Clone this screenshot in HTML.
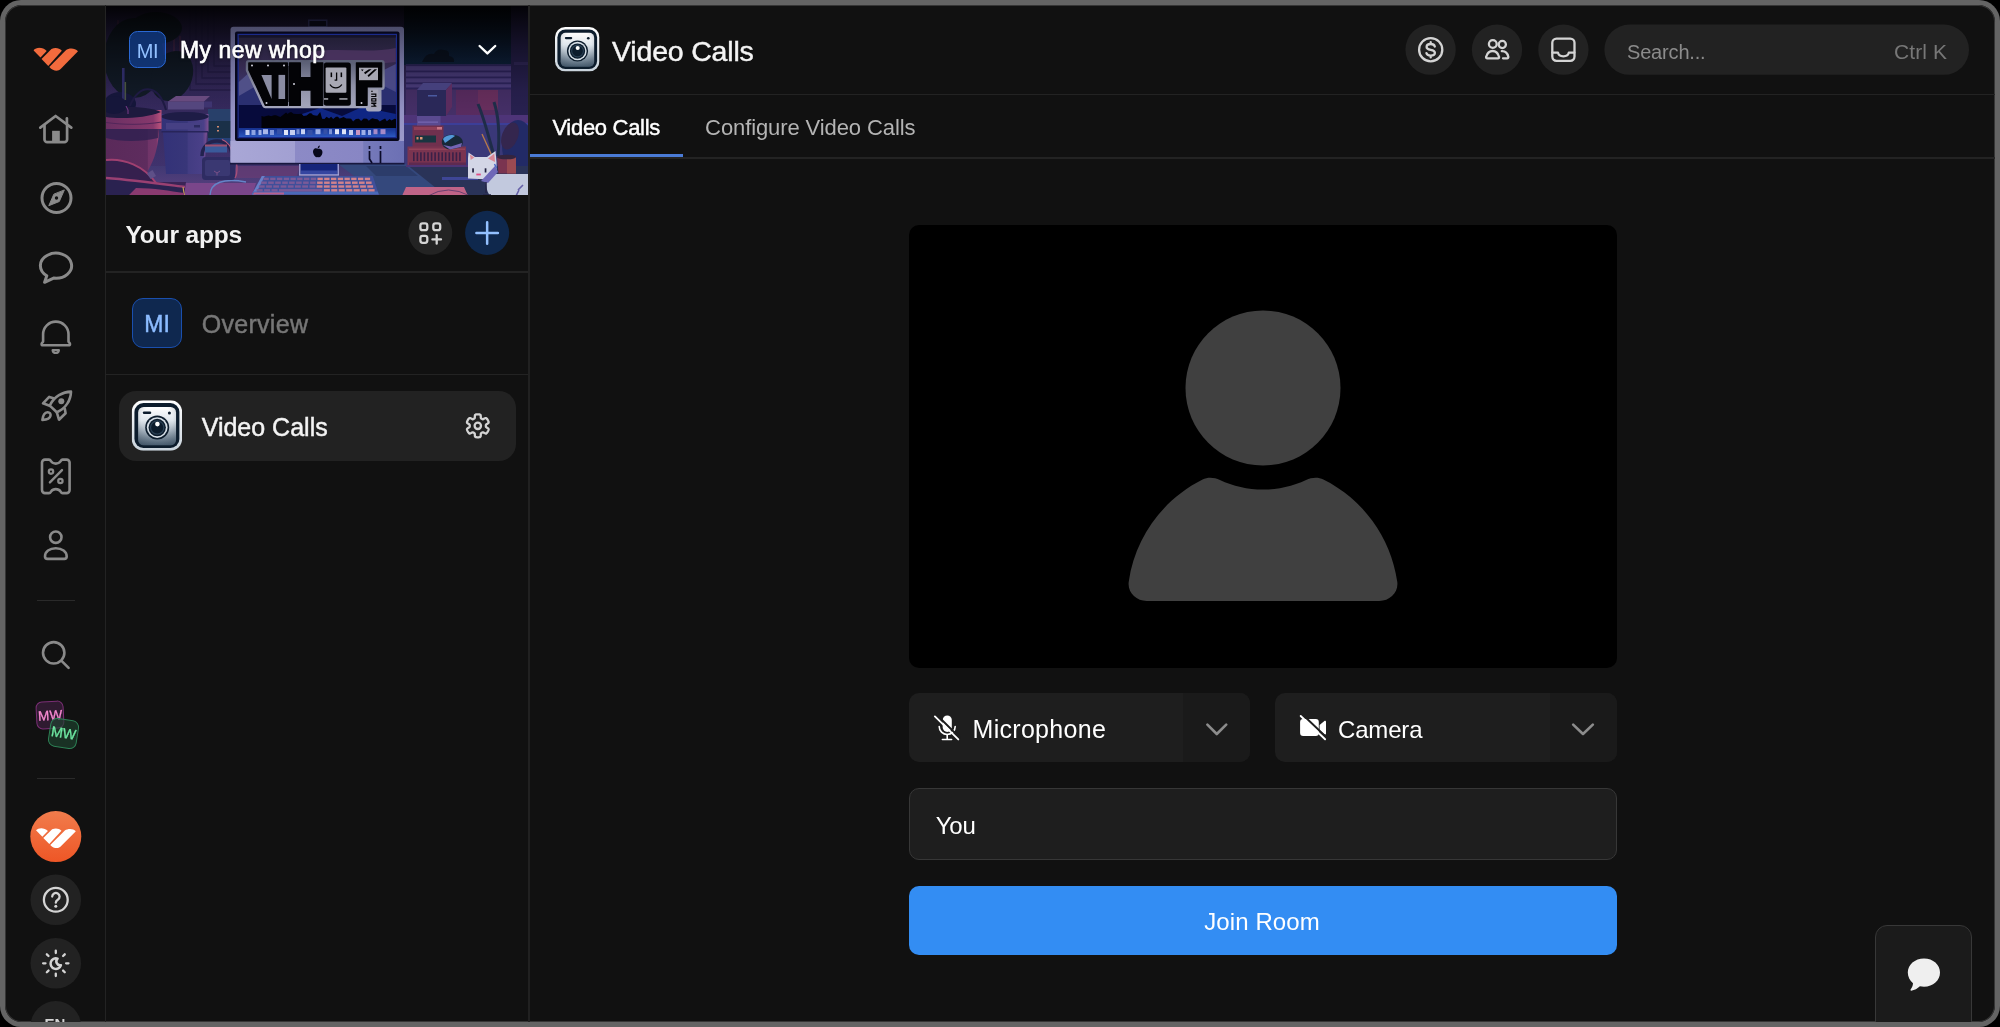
<!DOCTYPE html>
<html>
<head>
<meta charset="utf-8">
<title>Video Calls</title>
<style>
*{box-sizing:border-box;margin:0;padding:0}
html,body{width:2000px;height:1027px;overflow:hidden;background:#000}
body{font-family:"Liberation Sans",sans-serif;position:relative}
.abs{position:absolute}
#frame{position:absolute;left:0;top:0;width:2000px;height:1027px;background:#646464;border-radius:21px}
#app{position:absolute;left:5px;top:5px;width:1990px;height:1017px;background:#111111;border-radius:16.5px;overflow:hidden;box-shadow:inset 0 0 0 1px #363636}
/* everything inside #stage is positioned in page coordinates */
#stage{position:absolute;left:-5px;top:-5px;width:2000px;height:1027px;will-change:transform;transform:translateZ(0)}
.t{position:absolute;white-space:nowrap;line-height:1;color:#fff}
.sb{-webkit-text-stroke:0.45px currentColor}
.vline{position:absolute;width:1.25px;background:#232323}
.hline{position:absolute;height:1.25px;background:#232323}
.circ{position:absolute;border-radius:50%;background:#222222}
svg{position:absolute;overflow:visible}
.ric{fill:none;stroke:#8a8a8a;stroke-width:2.7;stroke-linecap:round;stroke-linejoin:round}
.lic{fill:none;stroke:#d4d4d4;stroke-width:2.3;stroke-linecap:round;stroke-linejoin:round}
</style>
</head>
<body>
<div id="frame"></div>
<div id="app"><div id="stage">

<!-- ===== dividers ===== -->
<div class="vline" style="left:105px;top:0;height:1027px"></div>
<div class="vline" style="left:528.3px;top:0;height:1027px;background:#212121"></div>
<div class="hline" style="left:529.5px;top:94.2px;width:1470px"></div>
<div class="hline" style="left:529.5px;top:157.4px;width:1470px"></div>
<div class="hline" style="left:106px;top:271.3px;width:422px"></div>
<div class="hline" style="left:106px;top:373.8px;width:422px"></div>
<div class="hline" style="left:37px;top:599.8px;width:38px;background:#2a2a2a"></div>
<div class="hline" style="left:37px;top:778px;width:38px;background:#2a2a2a"></div>

<!-- ===== BANNER ===== -->
<div id="banner" class="abs" style="left:106.2px;top:5.5px;width:422px;height:189.5px;overflow:hidden;background:#2c2558">
<!--BANNER_START--><svg style="left:0;top:0" width="422" height="189.5" viewBox="0 0 422 189.5" preserveAspectRatio="none">
<defs>
<linearGradient id="bwall" x1="0" y1="0" x2="0" y2="1"><stop offset="0" stop-color="#2a2250"/><stop offset=".5" stop-color="#3a2d66"/><stop offset="1" stop-color="#463878"/></linearGradient>
<linearGradient id="bsky" x1="0" y1="0" x2="0" y2="1"><stop offset="0" stop-color="#0a1020"/><stop offset="1" stop-color="#102848"/></linearGradient>
<linearGradient id="bdark" x1="0" y1="0" x2="0" y2="1"><stop offset="0" stop-color="#000" stop-opacity=".93"/><stop offset=".08" stop-color="#000" stop-opacity=".76"/><stop offset=".21" stop-color="#000" stop-opacity=".52"/><stop offset=".34" stop-color="#000" stop-opacity=".32"/><stop offset=".45" stop-color="#000" stop-opacity=".17"/><stop offset=".6" stop-color="#000" stop-opacity=".08"/><stop offset="1" stop-color="#000" stop-opacity="0.03"/></linearGradient>
<linearGradient id="bscr" x1="0" y1="0" x2="0" y2="1"><stop offset="0" stop-color="#211e34"/><stop offset=".3" stop-color="#34294e"/><stop offset=".48" stop-color="#3b3468"/><stop offset="1" stop-color="#343676"/></linearGradient>
<linearGradient id="bpot" x1="0" y1="0" x2="1" y2="0"><stop offset="0" stop-color="#5a2a5a"/><stop offset=".78" stop-color="#5e2c5e"/><stop offset=".8" stop-color="#703468"/><stop offset=".95" stop-color="#74366a"/><stop offset="1" stop-color="#b44c7a"/></linearGradient>
<linearGradient id="brim" x1="0" y1="0" x2="1" y2="0"><stop offset="0" stop-color="#6a2f62"/><stop offset=".85" stop-color="#86386c"/><stop offset="1" stop-color="#bc547c"/></linearGradient>
<linearGradient id="bpot2" x1="0" y1="0" x2="1" y2="0"><stop offset="0" stop-color="#333278"/><stop offset=".55" stop-color="#383679"/><stop offset=".57" stop-color="#423c82"/><stop offset=".9" stop-color="#4a4088"/><stop offset="1" stop-color="#805092"/></linearGradient>
<linearGradient id="bdesk" x1="0" y1="0" x2="0" y2="1"><stop offset="0" stop-color="#403872"/><stop offset="1" stop-color="#5e4282"/></linearGradient>
<linearGradient id="bchin" x1="0" y1="0" x2="1" y2="0"><stop offset="0" stop-color="#a9a7d6"/><stop offset=".37" stop-color="#a2a0d2"/><stop offset=".372" stop-color="#8c8ac6"/><stop offset=".765" stop-color="#8886c4"/><stop offset=".767" stop-color="#767aba"/><stop offset="1" stop-color="#6c70b4"/></linearGradient>
<linearGradient id="bfrm" x1="0" y1="0" x2="0" y2="1"><stop offset="0" stop-color="#4c4c6a"/><stop offset=".25" stop-color="#6e6e98"/><stop offset=".6" stop-color="#9290c2"/><stop offset="1" stop-color="#a3a1d2"/></linearGradient>
<linearGradient id="blogo" x1="0" y1="0" x2="0" y2="1"><stop offset="0" stop-color="#5c6076"/><stop offset=".5" stop-color="#8e90a6"/><stop offset="1" stop-color="#a4a6bc"/></linearGradient>
<linearGradient id="bdock" x1="0" y1="0" x2="0" y2="1"><stop offset="0" stop-color="#15308e"/><stop offset="1" stop-color="#2c58c0"/></linearGradient>
</defs>
<rect width="422" height="190" fill="url(#bwall)"/>
<g fill="none" stroke="#2a2152" stroke-width="1.4"><path d="M84 0 V84 H128 M90 0 V78 H128 M96 0 V72 H128 M102 0 V66 H128 M108 0 V60 H128"/></g>
<g stroke="#7a3a60" stroke-width="1" fill="none" opacity=".8"><path d="M68 18 V52 M74 30 V70 l2 8 M60 60 l5 -6 M20 40 v26 M12 14 v20"/></g>
<g fill="#141e2c"><ellipse cx="28" cy="52" rx="30" ry="40"/><ellipse cx="66" cy="70" rx="20" ry="26" transform="rotate(25 66 70)"/><ellipse cx="50" cy="22" rx="26" ry="16"/></g>
<rect x="298" y="0" width="110" height="59" fill="url(#bsky)"/>
<path d="M316 56 q4 -10 12 -8 q3 -6 10 -4 q6 0 5 6 q6 1 5 6Z" fill="#0c1628"/>
<rect x="300" y="58.500" width="108" height="24" fill="#54448c"/>
<g fill="#34296a"><rect x="300" y="58.500" width="108" height="1.600"/><rect x="300" y="64.500" width="108" height="1.800"/><rect x="300" y="70.500" width="108" height="1.800"/><rect x="300" y="76.400" width="108" height="1.800"/><rect x="300" y="81.500" width="108" height="2"/></g>
<rect x="300" y="83.500" width="108" height="34" fill="#4c3472"/>
<rect x="350" y="84" width="42" height="26" fill="#62306a"/><rect x="372" y="84" width="20" height="20" fill="#743468"/>
<rect x="405" y="0" width="17" height="130" fill="#2c2458"/><rect x="408" y="56" width="14" height="3" fill="#3a2f6a"/>
<!-- overlay (darkens background layers only) -->
<rect width="422" height="190" fill="url(#bdark)"/>

<!-- left mid -->
<ellipse cx="14" cy="98" rx="16" ry="12" fill="#15163a"/>
<rect x="16" y="62" width="2.600" height="42" fill="#2c2a62"/><rect x="18.600" y="76" width="1.500" height="18" fill="#6a7a4a" opacity=".6"/>
<path d="M24 100 C32 78 52 76 60 104" fill="none" stroke="#1e1a42" stroke-width="2"/>
<rect x="62" y="95.500" width="36" height="8" fill="#54467e"/><path d="M62 95.500 L70 90 H104 L98 95.500Z" fill="#684a7e"/><rect x="98" y="95.500" width="8" height="6" fill="#3e3470"/>
<rect x="102" y="103" width="23" height="12" fill="#28406a"/><rect x="102" y="115" width="23" height="17" fill="#1a3048"/><rect x="102" y="132" width="23" height="6" fill="#264078"/>
<rect x="111" y="120" width="2" height="1.500" fill="#d08a70"/><rect x="111" y="124" width="2" height="1.500" fill="#d08a70"/>
<!-- right lower wall -->
<rect x="298" y="109" width="124" height="9.500" fill="#4e3478"/><rect x="298" y="117" width="124" height="2" fill="#3c3e98"/>
<rect x="298" y="119" width="124" height="42" fill="#3a3878"/>
<path d="M388 150 C382 128 378 112 372 98 M392 150 C394 126 392 108 388 96" stroke="#1e2c48" stroke-width="3" fill="none"/>
<path d="M386 150 L376 128" stroke="#b87c4a" stroke-width="1.300"/>
<ellipse cx="412" cy="140" rx="16" ry="26" fill="#222a66"/><ellipse cx="404" cy="130" rx="8" ry="14" fill="#34264e" transform="rotate(20 404 130)"/>
<!-- desk -->
<path d="M0 160 H422 V190 H0Z" fill="url(#bdesk)"/>
<path d="M298 160 H422 V190 H300Z" fill="#2a3358"/>
<path d="M232 158 H300 L340 190 H275Z" fill="#34487c"/><path d="M260 160 H300 L312 170 H270Z" fill="#2c3c6a"/>
<path d="M300 181 H358 L362 190 H296Z" fill="#c06488"/><path d="M322 190 q20 -12 42 0" fill="none" stroke="#6a4070" stroke-width="1"/>
<path d="M336 171 H372 V174 H336Z" fill="#3e4696"/>
<path d="M130 160 H194 L190 172 H126Z" fill="#6a3c74" opacity=".7"/>
<path d="M78 177 H150 L146 190 H70Z" fill="#7a468a"/><path d="M0 176 L80 176 L78 190 H0Z" fill="#3a2456"/>
<path d="M104 190 C104 176 118 172 140 176" fill="none" stroke="#6484c8" stroke-width="1.400"/>
<!-- pot 2 -->
<path d="M57 126 H101 L98 168 H60Z" fill="url(#bpot2)"/>
<path d="M55.500 108 H102.500 V126 H55.500Z" fill="url(#bpot2)"/><ellipse cx="79" cy="110.500" rx="23.500" ry="4.600" fill="#1e1c46"/><rect x="60" y="117" width="36" height="6.500" fill="#464084"/><rect x="88" y="119" width="6" height="2.500" fill="#2c2a60"/><rect x="55.500" y="125" width="47" height="1.500" fill="#28255a"/>
<!-- pot 1 -->
<path d="M0 122 H53 C52.500 138 50 152 40 168 H0Z" fill="url(#bpot)"/><path d="M0 123 H53 L52 132 C36 136 14 136 0 132Z" fill="#2e2050" opacity=".8"/>
<path d="M0 104 H55.500 V123 H0Z" fill="url(#brim)"/><path d="M0 101.500 C20 100 45 101 55 106 C40 112.500 12 113 0 111Z" fill="#1e1a3e"/><path d="M0 116.500 C18 119 38 119 55.500 116" fill="none" stroke="#52265a" stroke-width="1"/>
<ellipse cx="8" cy="99" rx="13" ry="9" fill="#15163a"/><path d="M20 100 q3 4 2 8" stroke="#7a3a8a" stroke-width="1" fill="none"/>
<!-- chair -->
<path d="M0 154 C18 152 38 160 50 177 H0Z" fill="#35204e"/><path d="M0 154 C18 152 38 160 50 177" fill="none" stroke="#a04070" stroke-width="2"/>
<path d="M41 167.500 l5.500 -3.500 l3.500 6 l-5.500 3Z" fill="#5e5088"/>
<path d="M0 172 C28 174 56 178 79 181 L78 190 H0Z" fill="#2a2250"/><path d="M0 172 C28 174 56 178 79 181" fill="none" stroke="#9a4072" stroke-width="2.400"/><path d="M77 181 l1.500 9" stroke="#c8a058" stroke-width="1.200"/>
<path d="M30 182 C48 182 64 185 78 187 V190 H22Z" fill="#8a3a70"/>
<!-- backpack -->
<path d="M96 150 C96 130 126 130 126 150" fill="none" stroke="#22224e" stroke-width="3.500"/><path d="M116 133.500 C123 136 126 142 126.500 150" fill="none" stroke="#b85a7c" stroke-width="1.300"/>
<rect x="99" y="140" width="22" height="6.500" fill="#3a5a9a"/><rect x="99" y="138.500" width="22" height="2" fill="#9a5070"/>
<rect x="96" y="151" width="33" height="23" rx="3.500" fill="#2e2c62"/><rect x="99" y="154" width="25" height="16" rx="2" fill="#3a3872"/><path d="M128 153 c3.500 1 4 14 1 19" fill="none" stroke="#a85078" stroke-width="1.300"/>
<path d="M108 165 l3 2 l3 -2 M111 167 v2.500" stroke="#7a5088" stroke-width="1" fill="none"/>
<!-- radio stack -->
<rect x="311" y="84" width="29" height="26" fill="#2a2858"/><path d="M311 84 L317 77 H346 L340 84Z" fill="#45407c"/><path d="M340 84 L346 77 V101 L340 110Z" fill="#5a2c5e"/><rect x="322" y="89" width="9" height="1.500" fill="#4a5aa0"/>
<rect x="311" y="110" width="23.500" height="10" fill="#5a4a90"/><rect x="312" y="115.500" width="20" height="1.300" fill="#7464ae"/>
<rect x="306.500" y="119.500" width="31" height="21.500" fill="#70304e"/><rect x="308" y="121" width="28" height="3" fill="#8e3e58"/><rect x="331" y="121" width="5" height="2.500" fill="#c87484"/><rect x="309" y="129.500" width="21" height="7" fill="#1a3440"/><rect x="310.500" y="131" width="2" height="2.500" fill="#d88468"/><rect x="314" y="131" width="2.500" height="2.500" fill="#e09878"/>
<rect x="301.500" y="140.500" width="58.500" height="19" fill="#7a3450"/><rect x="303" y="142.500" width="56" height="1.500" fill="#94425a"/><rect x="303" y="156.500" width="57" height="2.700" fill="#5e2a50"/><rect x="307.0" y="146.3" width="1.6" height="8.8" fill="#3a2048"/><rect x="310.6" y="146.3" width="1.6" height="8.8" fill="#3a2048"/><rect x="314.1" y="146.3" width="1.6" height="8.8" fill="#3a2048"/><rect x="317.6" y="146.3" width="1.6" height="8.8" fill="#3a2048"/><rect x="321.2" y="146.3" width="1.6" height="8.8" fill="#3a2048"/><rect x="324.8" y="146.3" width="1.6" height="8.8" fill="#3a2048"/><rect x="328.3" y="146.3" width="1.6" height="8.8" fill="#3a2048"/><rect x="331.9" y="146.3" width="1.6" height="8.8" fill="#3a2048"/><rect x="335.4" y="146.3" width="1.6" height="8.8" fill="#3a2048"/><rect x="338.9" y="146.3" width="1.6" height="8.8" fill="#3a2048"/><rect x="342.5" y="146.3" width="1.6" height="8.8" fill="#3a2048"/><rect x="346.1" y="146.3" width="1.6" height="8.8" fill="#3a2048"/><rect x="349.6" y="146.3" width="1.6" height="8.8" fill="#3a2048"/><rect x="353.1" y="146.3" width="1.6" height="8.8" fill="#3a2048"/>
<rect x="300" y="159" width="62" height="2" fill="#4e3474"/>
<path d="M336 134 C338 128 350 127 355 132 C358 135 357 140 354 141.500 L344 143.500 C338 143 335 139 336 134Z" fill="#182838"/><path d="M337 133 C340 128.500 347 128.500 349 130 L339 137Z" fill="#5298d8"/><path d="M337 139 L344 143.500 L355 141 L356 137 L345 140.500Z" fill="#7464b4"/>
<!-- small pot right -->
<path d="M391 151 H410 V167.500 H392.500Z" fill="#7a3450"/><rect x="401" y="151" width="9" height="16.500" fill="#9a4a52"/><ellipse cx="400.500" cy="151" rx="9.500" ry="2.300" fill="#34243e"/>
<!-- cat -->
<path d="M380 168 H422 V190 H384 C380 184 379 176 380 168Z" fill="#c2c9de"/>
<path d="M362 172.500 V152 L362.500 146.500 L369 151 H381 L389.500 145 L390.500 156 V166 L384 173.500Z" fill="#d3d6e6"/>
<path d="M364 148.500 l4.300 3 l-3.600 2.500Z M388.300 147.500 l0.700 8.500 l-7 -3.500Z" fill="#da8896"/>
<rect x="366.200" y="162.300" width="1.700" height="4.200" fill="#20203e"/><rect x="378.700" y="162.300" width="1.700" height="4.200" fill="#20203e"/><rect x="370.300" y="167.600" width="4.500" height="1.800" fill="#e04c86"/>
<path d="M389 160 L392 166 L382 177 L375 175 Z" fill="#6e68b8"/><path d="M388.500 158 l2 4" stroke="#4666c8" stroke-width="1.400"/>
<path d="M380 176 v11 M377 189 h8" stroke="#26264a" stroke-width="1.600"/>
<path d="M412 184 l5 -5 M410 190 l3 -6" stroke="#6660a8" stroke-width="1.600"/>
<!-- monitor -->
<rect x="202" y="13.500" width="19.500" height="8" fill="#16162c"/><rect x="203.500" y="15" width="16.500" height="5" fill="#06060e"/>
<rect x="124.500" y="20.800" width="173.500" height="137" rx="3" fill="url(#bfrm)"/>
<rect x="124.500" y="135" width="173.500" height="22.500" fill="url(#bchin)"/>
<rect x="124" y="156.800" width="174.500" height="1.700" fill="#18183e"/>
<rect x="129" y="25.400" width="164.500" height="109.500" rx="2" fill="#07071c"/>
<rect x="131.500" y="27.800" width="159.500" height="104.500" fill="#1a2a8a"/>
<rect x="132.800" y="29" width="157" height="102" fill="url(#bscr)"/>
<rect x="132.800" y="29" width="157" height="2.600" fill="#15132a"/>
<path d="M205 46 C232 41 262 48 289.800 42 V56 C262 60 232 53 205 58Z" fill="#4e3462" opacity=".8"/>
<path d="M132.800 76 L146 64 L160 74 L176 62 L196 78 L132.800 98Z" fill="#55568e" opacity=".85"/>
<path d="M132.800 90 L150 80 L170 88 L200 74 L232 88 L262 72 L289.800 84 V112 H132.800Z" fill="#2a2f70"/>
<path d="M262 72 L289.800 58 V86Z" fill="#4e4e8c" opacity=".8"/>
<rect x="132.800" y="99" width="157" height="32" fill="#070b3c"/>
<path d="M196 122 V108 L214 102 L236 110 L256 101 L289.800 108 V122Z" fill="#0f2684"/>
<path d="M155.5 122 L155.5 110 L155.5 109.9 L158.0 110.8 L160.2 110.0 L162.7 109.4 L165.1 110.3 L168.0 109.2 L170.0 109.2 L172.9 110.4 L174.4 111.0 L177.6 108.6 L180.1 106.6 L181.6 108.1 L183.2 106.8 L185.1 106.1 L187.4 107.8 L190.4 108.1 L193.0 108.0 L195.6 107.8 L197.6 110.0 L200.7 109.4 L203.5 107.3 L205.3 107.2 L207.0 109.1 L209.1 109.4 L211.3 109.8 L214.2 106.0 L216.1 112.8 L218.4 113.0 L220.6 110.7 L223.1 112.4 L225.1 110.7 L227.2 112.9 L230.0 110.8 L231.9 110.8 L233.5 112.5 L235.3 111.9 L237.5 111.0 L240.3 112.5 L242.9 112.4 L245.1 112.7 L247.1 115.4 L249.9 113.1 L252.9 112.7 L255.1 115.0 L257.7 112.4 L260.9 112.7 L262.8 114.7 L264.9 113.0 L266.5 112.3 L269.0 112.9 L271.5 113.3 L273.8 115.4 L276.1 114.0 L279.1 112.6 L280.8 115.2 L283.7 112.9 L285.5 114.6 L288.6 112.7 L290 113 L290 122.5 L155.5 122.5Z" fill="#020208"/>
<rect x="132.800" y="122" width="157" height="9" fill="url(#bdock)"/>
<rect x="139.5" y="124.0" width="4" height="5" fill="#c9d3f3"/><rect x="145.5" y="124.0" width="4" height="5" fill="#8ea3e2"/><rect x="152.5" y="124.0" width="3" height="5" fill="#9fb1e8"/><rect x="157.0" y="123.2" width="5" height="5" fill="#a9b8ea"/><rect x="164.0" y="124.0" width="4" height="5" fill="#7f95d8"/><rect x="171.0" y="123.2" width="5" height="5" fill="#3450a8"/><rect x="178.0" y="124.0" width="4" height="5" fill="#dfe4f8"/><rect x="184.0" y="124.0" width="5" height="5" fill="#c4cef0"/><rect x="190.5" y="123.2" width="3" height="5" fill="#6f88d0"/><rect x="195.0" y="123.2" width="4" height="5" fill="#c9d3f3"/><rect x="201.5" y="124.0" width="5" height="5" fill="#3450a8"/><rect x="209.5" y="123.2" width="5" height="5" fill="#9fb1e8"/><rect x="217.5" y="123.2" width="4" height="5" fill="#3450a8"/><rect x="223.0" y="123.2" width="3" height="5" fill="#7f95d8"/><rect x="229.0" y="123.2" width="4" height="5" fill="#e2e7f8"/><rect x="236.0" y="123.2" width="4" height="5" fill="#dfe4f8"/><rect x="243.0" y="124.0" width="4" height="5" fill="#c4cef0"/><rect x="250.0" y="124.0" width="4" height="5" fill="#c894c0"/><rect x="255.5" y="124.0" width="4" height="5" fill="#9fb0e8"/><rect x="262.0" y="124.0" width="3" height="5" fill="#9fb0e8"/><rect x="267.5" y="123.2" width="4" height="5" fill="#a58ac8"/><rect x="274.5" y="123.2" width="5" height="5" fill="#a58ac8"/>
<!-- WHOP logo -->
<g>
<path d="M142.800 56.900 H275.700 V80.900 H272.500 V102.500 H263 V99.300 H250.400 H159.200 L142.800 64Z" fill="url(#blogo)" stroke="url(#blogo)" stroke-width="6" stroke-linejoin="round"/>
<path d="M142.800 56.900 H181.400 V99.300 H159.200 L142.800 64Z" fill="#030306" stroke="#030306" stroke-width="1.2" stroke-linejoin="round"/>
<path d="M155.400 68.900 H165.600 V93Z" fill="#8a8ca2"/><rect x="172.500" y="68.900" width="6.600" height="24.100" fill="#8a8ca2"/>
<path d="M183.400 56.900 H194.400 V71.500 H205.100 V56.900 H216.800 V99.300 H205.100 V84.100 H194.400 V99.300 H183.400Z" fill="#030306" stroke="#030306" stroke-width="1.2" stroke-linejoin="round"/>
<rect x="181.400" y="60" width="2" height="36" fill="#030306" opacity=".55"/>
<rect x="217.800" y="56.400" width="27" height="43.400" rx="2.500" fill="#030306"/>
<rect x="219.600" y="61.600" width="20.800" height="25.200" rx="1" fill="#a8a8b4"/>
<rect x="224.600" y="66.500" width="1.500" height="4.600" fill="#030306"/><rect x="234.600" y="66.500" width="1.500" height="4.600" fill="#030306"/>
<path d="M230.600 66.500 V74.200 H228.600" fill="none" stroke="#030306" stroke-width="1.300"/><path d="M224 78.500 C226.500 83 233 83 235.800 78.500" fill="none" stroke="#030306" stroke-width="1.300"/>
<rect x="218" y="92.300" width="4.200" height="1.300" fill="#c0c0ca"/><rect x="233.300" y="92.300" width="8.200" height="1.300" fill="#c0c0ca"/>
<path d="M250.400 56.900 H275.700 V80.900 H261.100 V99.300 H250.400Z" fill="#030306" stroke="#030306" stroke-width="1.2" stroke-linejoin="round"/>
<rect x="253" y="61.700" width="19" height="12.500" fill="#a8a8b4"/>
<path d="M255 63.500 l2.600 0 l-1.300 1.700Z M258 66.600 l5 -3.300 l2.600 0 l-6.400 4.900Z M261.500 69.500 l7 -6.200 l2.500 0 l-8.300 7.700Z" fill="#030306"/>
<rect x="263.600" y="83.500" width="8.600" height="18.500" fill="#a4a4b4"/>
<g fill="#030306"><rect x="265.300" y="84.700" width="1.300" height="1.300"/><path d="M265.200 87.500 h5.200 v3.600 h-5.200 v-1.200 h4 v-1.200 h-4Z"/><rect x="265.200" y="92.200" width="5.200" height="3.400"/><path d="M265.200 96.600 h5.200 v1.100 l-2 1 l2 1 v1.100 h-5.200 v-1.100 h3 l-1.600 -.9 l1.600 -.9 h-3Z"/></g>
<rect x="266.400" y="93.300" width="2.800" height="1.200" fill="#a4a4b4"/>
<g fill="#d0d0dc"><circle cx="146" cy="59.500" r="1"/><circle cx="162" cy="59.500" r="1"/><circle cx="178" cy="59.500" r="1"/><circle cx="188" cy="78" r="1"/><circle cx="160.500" cy="97" r="1"/><circle cx="255.500" cy="97" r="1"/></g>
</g>
<path d="M211.800 142.800 c-2.600 -1.600 -5.400 .6 -4.600 4.200 c.8 3.400 3 4.800 4.700 3.900 c1.700 .9 3.900 -.5 4.500 -3.900 c.4 -2.200 -.9 -4.800 -4.600 -4.200Z M211.600 142.400 c.2 -1.800 1.200 -2.600 2.200 -2.800 c.1 1.500 -.7 2.600 -2.200 2.800Z" fill="#07071a"/>
<path d="M263.500 140 v3 M263.500 145 v8 l2.500 4 M274.500 140 v3 M274.500 145 v12" stroke="#0a0a28" stroke-width="1.700" fill="none"/>
<rect x="193" y="158" width="40" height="11" fill="#15247a"/><rect x="195" y="164.500" width="36" height="4.500" fill="#3545a0"/><rect x="193" y="158" width="1.500" height="11" fill="#9a9ad0"/><rect x="231.500" y="158" width="1.500" height="11" fill="#9a9ad0"/><rect x="193" y="168.300" width="40" height="1.300" fill="#a8a8d8"/>
<path d="M155.800 170 H266.800 L272.800 188.500 H145.800Z" fill="#3f4f9a"/>
<path d="M155.800 170 L145.800 188.500 L149.500 188.500 L158.800 170Z" fill="#6a80c8"/>
<path d="M147.500 185.500 H271.800 L272.800 188.500 H145.800Z" fill="#4a6ab8"/>
<path d="M148 186.500 H178 V188.500 H147Z" fill="#b8608c"/>
<rect x="157.5" y="171.7" width="5.3" height="2.4" fill="#7a5a98"/><rect x="164.2" y="171.7" width="5.3" height="2.4" fill="#7a5a98"/><rect x="171.0" y="171.7" width="5.3" height="2.4" fill="#7a5a98"/><rect x="177.8" y="171.7" width="5.3" height="2.4" fill="#7a5a98"/><rect x="184.5" y="171.7" width="5.3" height="2.4" fill="#7a5a98"/><rect x="191.2" y="171.7" width="5.3" height="2.4" fill="#7a5a98"/><rect x="198.0" y="171.7" width="5.3" height="2.4" fill="#7a5a98"/><rect x="204.8" y="171.7" width="5.3" height="2.4" fill="#7a5a98"/><rect x="211.5" y="171.7" width="5.3" height="2.4" fill="#d2828c"/><rect x="218.2" y="171.7" width="5.3" height="2.4" fill="#d2828c"/><rect x="225.0" y="171.7" width="5.3" height="2.4" fill="#d2828c"/><rect x="231.8" y="171.7" width="5.3" height="2.4" fill="#d2828c"/><rect x="238.5" y="171.7" width="5.3" height="2.4" fill="#d2828c"/><rect x="245.2" y="171.7" width="5.3" height="2.4" fill="#d2828c"/><rect x="252.0" y="171.7" width="5.3" height="2.4" fill="#d2828c"/><rect x="258.8" y="171.7" width="5.3" height="2.4" fill="#d2828c"/><rect x="155.2" y="175.5" width="5.6" height="2.4" fill="#7a5a98"/><rect x="162.2" y="175.5" width="5.6" height="2.4" fill="#7a5a98"/><rect x="169.2" y="175.5" width="5.6" height="2.4" fill="#7a5a98"/><rect x="176.2" y="175.5" width="5.6" height="2.4" fill="#7a5a98"/><rect x="183.1" y="175.5" width="5.6" height="2.4" fill="#7a5a98"/><rect x="190.1" y="175.5" width="5.6" height="2.4" fill="#7a5a98"/><rect x="197.1" y="175.5" width="5.6" height="2.4" fill="#7a5a98"/><rect x="204.1" y="175.5" width="5.6" height="2.4" fill="#7a5a98"/><rect x="211.1" y="175.5" width="5.6" height="2.4" fill="#d2828c"/><rect x="218.1" y="175.5" width="5.6" height="2.4" fill="#d2828c"/><rect x="225.1" y="175.5" width="5.6" height="2.4" fill="#d2828c"/><rect x="232.1" y="175.5" width="5.6" height="2.4" fill="#d2828c"/><rect x="239.1" y="175.5" width="5.6" height="2.4" fill="#d2828c"/><rect x="246.0" y="175.5" width="5.6" height="2.4" fill="#d2828c"/><rect x="253.0" y="175.5" width="5.6" height="2.4" fill="#d2828c"/><rect x="260.0" y="175.5" width="5.6" height="2.4" fill="#d2828c"/><rect x="152.9" y="179.3" width="5.8" height="2.4" fill="#7a5a98"/><rect x="160.1" y="179.3" width="5.8" height="2.4" fill="#7a5a98"/><rect x="167.3" y="179.3" width="5.8" height="2.4" fill="#7a5a98"/><rect x="174.6" y="179.3" width="5.8" height="2.4" fill="#7a5a98"/><rect x="181.8" y="179.3" width="5.8" height="2.4" fill="#7a5a98"/><rect x="189.0" y="179.3" width="5.8" height="2.4" fill="#7a5a98"/><rect x="196.2" y="179.3" width="5.8" height="2.4" fill="#7a5a98"/><rect x="203.5" y="179.3" width="5.8" height="2.4" fill="#7a5a98"/><rect x="210.7" y="179.3" width="5.8" height="2.4" fill="#d2828c"/><rect x="217.9" y="179.3" width="5.8" height="2.4" fill="#d2828c"/><rect x="225.2" y="179.3" width="5.8" height="2.4" fill="#d2828c"/><rect x="232.4" y="179.3" width="5.8" height="2.4" fill="#d2828c"/><rect x="239.6" y="179.3" width="5.8" height="2.4" fill="#d2828c"/><rect x="246.8" y="179.3" width="5.8" height="2.4" fill="#d2828c"/><rect x="254.1" y="179.3" width="5.8" height="2.4" fill="#d2828c"/><rect x="261.3" y="179.3" width="5.8" height="2.4" fill="#d2828c"/><rect x="150.6" y="183.1" width="6.1" height="2.4" fill="#7a5a98"/><rect x="158.1" y="183.1" width="6.1" height="2.4" fill="#7a5a98"/><rect x="165.5" y="183.1" width="6.1" height="2.4" fill="#7a5a98"/><rect x="173.0" y="183.1" width="43.4" height="2.4" fill="#7a5a98"/><rect x="217.8" y="183.1" width="6.1" height="2.4" fill="#d2828c"/><rect x="225.2" y="183.1" width="6.1" height="2.4" fill="#d2828c"/><rect x="232.7" y="183.1" width="6.1" height="2.4" fill="#d2828c"/><rect x="240.2" y="183.1" width="6.1" height="2.4" fill="#d2828c"/><rect x="247.6" y="183.1" width="6.1" height="2.4" fill="#d2828c"/><rect x="255.1" y="183.1" width="6.1" height="2.4" fill="#d2828c"/><rect x="262.5" y="183.1" width="6.1" height="2.4" fill="#d2828c"/>
</svg><!--BANNER_END-->
</div>

<!-- banner header -->
<div class="abs" style="left:128.7px;top:30.8px;width:37.6px;height:37.6px;border-radius:8.5px;background:rgba(20,74,172,.6);border:1.5px solid #2a68d4"></div>
<div class="t" style="left:136.8px;top:41.3px;font-size:20px;color:#93c1ff;letter-spacing:-0.4px">MI</div>
<div class="t" style="left:180px;top:39.2px;font-size:23px;letter-spacing:0.45px;-webkit-text-stroke:0.65px #fff;text-shadow:0 1px 3px rgba(0,0,0,.6)">My new whop</div>
<svg style="left:476px;top:40px" width="24" height="20" viewBox="0 0 24 20"><path d="M3.6 6 L11.4 13.4 L19.2 6" fill="none" stroke="#fff" stroke-width="2.4" stroke-linecap="round" stroke-linejoin="round"/></svg>

<!-- ===== Your apps ===== -->
<div class="t" style="left:125.4px;top:223px;font-size:24.5px;font-weight:700;letter-spacing:-0.15px;color:#f2f2f2">Your apps</div>

<!-- Overview row -->
<div class="abs" style="left:131.6px;top:297.9px;width:50.6px;height:50.4px;border-radius:11px;background:#0f284f;border:1.5px solid #1a4fae"></div>
<div class="t sb" style="left:144.3px;top:312.5px;font-size:23px;color:#8cbcff">MI</div>
<div class="t sb" style="left:201.7px;top:312.3px;font-size:25px;color:#777777;letter-spacing:0.3px">Overview</div>

<!-- Video calls selected row -->
<div class="abs" style="left:119.2px;top:391px;width:396.5px;height:69.5px;border-radius:17px;background:#222222"></div>
<div class="t sb" style="left:201.7px;top:415.1px;font-size:25px;color:#f4f4f4">Video Calls</div>

<!-- ===== HEADER ===== -->
<div class="t sb" style="left:612px;top:37px;font-size:28.5px;letter-spacing:-0.18px;color:#f4f4f4">Video Calls</div>
<svg style="left:0;top:0" width="2000" height="300" viewBox="0 0 2000 300">
<circle cx="1430.6" cy="49.65" r="25.15" fill="#222"/><circle cx="1497" cy="49.65" r="25.15" fill="#222"/><circle cx="1563.4" cy="49.65" r="25.15" fill="#222"/>
<rect x="1604.4" y="24.5" width="364.6" height="50.3" rx="25.15" fill="#222"/>
<circle cx="430.3" cy="232.9" r="21.95" fill="#232323"/><circle cx="487.15" cy="232.9" r="22.05" fill="#0f284d"/>
</svg>
<div class="t" style="left:1627px;top:42px;font-size:20px;color:#8b8b8b;letter-spacing:-0.17px">Search...</div>
<div class="t" style="left:1894px;top:41px;font-size:21px;color:#777777;letter-spacing:0.1px">Ctrl K</div>

<!-- tabs -->
<div class="t sb" style="left:552.4px;top:117px;font-size:22px;letter-spacing:-0.3px">Video Calls</div>
<div class="t" style="left:705.1px;top:117px;font-size:22px;letter-spacing:-0.1px;color:#b4b4b4">Configure Video Calls</div>
<div class="abs" style="left:529.9px;top:153.7px;width:153px;height:3.6px;background:#4a7bd6"></div>

<!-- ===== MAIN ===== -->
<div class="abs" style="left:908.6px;top:224.8px;width:708.2px;height:442.8px;border-radius:10px;background:#000"></div>
<svg style="left:1107.8px;top:291.3px" width="310" height="310" viewBox="0 0 320 320"><path d="M160 180C204.182 180 240 144.183 240 100C240 55.8172 204.182 20 160 20C115.817 20 79.9997 55.8172 79.9997 100C79.9997 144.183 115.817 180 160 180Z" fill="#404040"/><path d="M97.6542 194.614C103.267 191.818 109.841 192.481 115.519 195.141C129.025 201.466 144.1 205 159.999 205C175.899 205 190.973 201.466 204.48 195.141C210.158 192.481 216.732 191.818 222.345 194.614C262.703 214.719 291.985 253.736 298.591 300.062C300.15 310.997 291.045 320 280 320H39.9997C28.9545 320 19.8499 310.997 21.4092 300.062C28.0157 253.736 57.2966 214.719 97.6542 194.614Z" fill="#404040"/></svg>

<!-- mic group -->
<div class="abs" style="left:908.7px;top:693.2px;width:341.3px;height:68.8px;border-radius:10px;background:#1e1e1e;overflow:hidden"><div class="abs" style="left:274.5px;top:0;width:70px;height:70px;background:#1a1a1a"></div></div>
<div class="t" style="left:972.5px;top:717.4px;font-size:25px;letter-spacing:0.3px">Microphone</div>
<!-- cam group -->
<div class="abs" style="left:1275px;top:693.2px;width:341.7px;height:68.8px;border-radius:10px;background:#1e1e1e;overflow:hidden"><div class="abs" style="left:275px;top:0;width:70px;height:70px;background:#1a1a1a"></div></div>
<div class="t" style="left:1338px;top:718.3px;font-size:24px;letter-spacing:-0.17px">Camera</div>

<!-- input -->
<div class="abs" style="left:908.7px;top:788.1px;width:708px;height:72px;border-radius:10px;background:#1e1e1e;border:1.3px solid #373737"></div>
<div class="t" style="left:935.7px;top:813.9px;font-size:24px;letter-spacing:-0.2px">You</div>
<!-- join -->
<div class="abs" style="left:908.7px;top:885.6px;width:708px;height:69.4px;border-radius:10px;background:#338df3"></div>
<div class="t" style="left:1204.2px;top:910.3px;font-size:24px;letter-spacing:0.1px">Join Room</div>

<!-- chat widget -->
<div class="abs" style="left:1875.2px;top:925.1px;width:97.3px;height:120px;border-radius:12px;background:#1b1b1b;border:1.3px solid #383838"></div>

<!-- MW avatars -->
<div class="abs" style="left:36px;top:701.4px;width:28.2px;height:28.4px;border-radius:6.5px;background:#2f1a30;border:1.3px solid #7b2f76;transform:rotate(-3deg)"></div>
<div class="t" style="left:37.8px;top:709.1px;font-size:13.6px;color:#f68ad0;transform:rotate(-3deg);letter-spacing:0.25px;-webkit-text-stroke:0.3px #f68ad0">MW</div>
<div class="abs" style="left:49px;top:718.8px;width:29px;height:29px;border-radius:7px;background:rgba(30,70,48,.62);border:1.3px solid #2d8055;transform:rotate(9deg)"></div>
<div class="t" style="left:50.6px;top:726px;font-size:14.2px;color:#6ee8a2;transform:rotate(9deg);letter-spacing:-0.15px;-webkit-text-stroke:0.3px #6ee8a2">MW</div>
<div class="t" style="left:44.6px;top:1016.4px;font-size:15px;font-weight:700;color:#d4d4d4;z-index:5">EN</div>
<!--ICONS_START-->
<svg id="icons" style="left:0;top:0" width="2000" height="1027" viewBox="0 0 2000 1027">
<defs>
 <linearGradient id="camg" x1="0" y1="0" x2="0" y2="1"><stop offset="0" stop-color="#ffffff"/><stop offset=".35" stop-color="#dfe6ec"/><stop offset="1" stop-color="#566b7e"/></linearGradient>
 <radialGradient id="camv" cx=".5" cy=".35" r=".75"><stop offset=".55" stop-color="#0c1c2c" stop-opacity="0"/><stop offset="1" stop-color="#0c1c2c" stop-opacity=".28"/></radialGradient>
 <linearGradient id="camo" x1="0" y1="0" x2="0" y2="1"><stop offset="0" stop-color="#ffffff"/><stop offset="1" stop-color="#c9d3dc"/></linearGradient>
 <symbol id="cam" viewBox="0 0 50 50">
  <rect x="0" y="0" width="50" height="50" rx="11.5" fill="url(#camo)"/>
  <rect x="2.7" y="2.7" width="44.6" height="44.6" rx="9" fill="#0c1c2c"/>
  <rect x="6.4" y="6.6" width="37.6" height="38" rx="5.5" fill="url(#camg)"/>
  <rect x="6.4" y="6.6" width="37.6" height="38" rx="5.5" fill="url(#camv)"/>
  <circle cx="25.3" cy="27" r="11.9" fill="#0c1c2c"/>
  <circle cx="25.3" cy="27" r="10.3" fill="#d6dfe7"/>
  <circle cx="25.3" cy="27" r="8.6" fill="#0c1c2c"/>
  <circle cx="25.3" cy="27" r="6.6" fill="none" stroke="#2a4054" stroke-width="1.2"/>
  <circle cx="25.5" cy="23.6" r="2.3" fill="#ffffff"/>
  <rect x="11" y="11.2" width="8.4" height="2.5" rx="1.25" fill="#0c1c2c"/>
  <circle cx="37.4" cy="12.6" r="1.5" fill="#0c1c2c"/>
 </symbol>
 <symbol id="whop" viewBox="0 0 630 325" preserveAspectRatio="none">
  <path d="M0 40 C40 -5 130 -10 188 52 L100 140 Z"/>
  <path d="M115 160 L255 22 C310 0 365 8 402 48 L210 255 Z"/>
  <path d="M225 270 L455 42 C505 8 585 8 630 55 L385 298 C345 333 280 328 225 270 Z"/>
 </symbol>
 <linearGradient id="orng" x1="0" y1="0" x2="0" y2="1"><stop offset="0" stop-color="#f17c4c"/><stop offset="1" stop-color="#ee5626"/></linearGradient>
</defs>

<!-- whop logo top -->
<use href="#whop" x="33.4" y="47.3" width="44.6" height="23.8" fill="#f26b3d"/>

<!-- home -->
<g class="ric">
<path d="M40.3 127.6 L55.6 116 L71.3 127.6"/>
<path d="M44.5 125 V139.4 a2.8 2.8 0 0 0 2.8 2.8 H64.3 a2.8 2.8 0 0 0 2.8 -2.8 V125"/>
<path d="M66.9 123.5 V118.4"/>
<rect x="52.1" y="130.8" width="7.7" height="11.4" fill="#8a8a8a" stroke="none"/>
<!-- compass -->
<circle cx="56.5" cy="198" r="14.5" stroke-width="3"/>
<path d="M64.2 190.3 L59.3 201.5 L48.8 205.7 L53.7 194.5Z" fill="#8a8a8a" stroke-width="1"/>
<circle cx="56.5" cy="198" r="1.7" fill="#111" stroke="none"/>
<!-- chat -->
<path d="M53.6 278.05 A15.6 12.5 0 1 0 46.8 275.8 L44.6 282.3 Z" stroke-width="3"/>
<!-- bell -->
<path d="M43.1 334.3 A12.7 12.7 0 0 1 68.5 334.3 V341.5 C68.5 342.5 70 342.6 70 343.9 C70 344.8 69.4 345.2 68.6 345.2 H43 C42.2 345.2 41.6 344.8 41.6 343.9 C41.6 342.6 43.1 342.5 43.1 341.5 Z" stroke-width="2.6"/>
<path d="M52.6 350.2 H58.9 C58.6 352 57.3 353 55.75 353 C54.2 353 52.9 352 52.6 350.2Z" stroke-width="2.2"/>
<!-- rocket -->
<g stroke-width="2.6">
<path d="M71 391.6 C63 391.8 54 396 49.8 405.6 L56.8 412.2 C66 408.5 70.8 400 71 391.6Z"/>
<circle cx="61.3" cy="401.2" r="3" fill="#8a8a8a" stroke="none"/>
<path d="M53.5 398.3 L49.2 396.9 L43 403.3 L49.6 405.8"/>
<path d="M64.8 408.8 L65.6 413.3 L59 419.7 L56.9 412.6"/>
<path d="M42.4 420 C42.8 416.2 44 412.4 47.5 412.2 C49.8 412.1 50.9 414 50.5 415.7 C49.9 418.7 46.2 419.7 42.4 420Z"/>
</g>
<!-- ticket -->
<g stroke-width="2.6">
<path d="M45 459.6 H49 C50.5 459.6 50.6 460.6 51.2 461.4 C52.2 462.9 53.9 463.6 55.8 463.6 C57.7 463.6 59.4 462.9 60.4 461.4 C61 460.6 61.1 459.6 62.6 459.6 H66.6 A3 3 0 0 1 69.6 462.6 V490.1 A3 3 0 0 1 66.6 493.1 H62.6 C61.1 493.1 61 492.1 60.4 491.3 C59.4 489.8 57.7 489.1 55.8 489.1 C53.9 489.1 52.2 489.8 51.2 491.3 C50.6 492.1 50.5 493.1 49 493.1 H45 A3 3 0 0 1 42 490.1 V462.6 A3 3 0 0 1 45 459.6Z"/>
<circle cx="51" cy="471.6" r="2.2" stroke-width="2.2"/><circle cx="60.4" cy="481" r="2.2" stroke-width="2.2"/>
<path d="M62 470.1 L49.9 482.4" stroke-width="2.4"/>
</g>
<!-- user -->
<g stroke-width="2.6">
<circle cx="55.8" cy="537.2" r="5.7"/>
<path d="M45 556.5 C45 551.5 49.5 548.2 55.8 548.2 C62.1 548.2 66.7 551.5 66.7 556.5 C66.7 557.9 65.7 558.9 64.3 558.9 H47.4 C46 558.9 45 557.9 45 556.5Z"/>
</g>
<!-- search -->
<g stroke-width="2.6"><circle cx="53.7" cy="652.8" r="10.7"/><path d="M61.6 660.8 L68.6 667.8"/></g>
</g>

<!-- orange whop button -->
<circle cx="55.8" cy="836.6" r="25.5" fill="url(#orng)"/>
<use href="#whop" x="36" y="827.8" width="39.9" height="20.6" fill="#ffffff"/>

<!-- help / theme / EN circles -->
<circle cx="55.8" cy="899.8" r="25.3" fill="#222"/>
<circle cx="55.8" cy="963.3" r="25.3" fill="#222"/>
<circle cx="55.8" cy="1026.3" r="25.3" fill="#222"/>
<g class="lic" stroke-width="2.4">
<circle cx="55.8" cy="899.8" r="11.9"/>
<path d="M52.2 896.6 a3.7 3.7 0 1 1 5.6 3.2 c-1.4 .8 -2 1.5 -2 2.9"/>
<circle cx="55.8" cy="906.2" r="1.5" fill="#d4d4d4" stroke="none"/>
<path d="M66.10 963.30L68.50 963.30M63.08 970.58L64.78 972.28M55.80 973.60L55.80 976.00M48.52 970.58L46.82 972.28M45.50 963.30L43.10 963.30M48.52 956.02L46.82 954.32M55.80 953.00L55.80 950.60M63.08 956.02L64.78 954.32"/>
<path d="M57.6 958.6 A5.3 5.3 0 1 0 60.9 965.3 A3.9 3.9 0 0 1 57.6 958.6Z" stroke-width="2.5"/>
</g>

<!-- header icons -->
<g class="lic">
<circle cx="1430.7" cy="49.7" r="11.6"/>
<path d="M1434.8 46.5 C1434.3 44.8 1432.8 44 1430.7 44 C1428.3 44 1426.6 45.1 1426.6 46.9 C1426.6 48.7 1428 49.3 1430.7 49.8 C1433.4 50.3 1434.9 51 1434.9 52.8 C1434.9 54.6 1433.1 55.6 1430.7 55.6 C1428.4 55.6 1426.8 54.8 1426.4 53.1 M1430.7 42.2 V44 M1430.7 55.6 V57.4"/>
<circle cx="1492.8" cy="44" r="3.9"/>
<path d="M1487.3 58.4 C1486.3 58.4 1485.9 57.6 1486.2 56.7 C1487.1 53.4 1489.6 51 1492.6 51 C1495.6 51 1498.1 53.4 1499 56.7 C1499.3 57.6 1498.9 58.4 1497.9 58.4Z"/>
<circle cx="1502.3" cy="44.5" r="3.6"/>
<path d="M1501.8 51.1 C1505.3 50.9 1507.6 53.4 1508.3 56.7 C1508.5 57.6 1508 58.3 1507.1 58.3 H1503"/>
<rect x="1552.3" y="38.6" width="22.2" height="22.2" rx="4.2"/>
<path d="M1552.3 52.6 H1558 C1558.4 54.7 1560.4 56.3 1563.4 56.3 C1566.4 56.3 1568.4 54.7 1568.8 52.6 H1574.4"/>
</g>

<!-- grid+ and plus -->
<g class="lic" stroke="#d0d0d0" stroke-width="2.4">
<rect x="420.4" y="223.3" width="6.9" height="6.9" rx="2.2"/>
<rect x="433.3" y="223.3" width="6.9" height="6.9" rx="2.2"/>
<rect x="420.4" y="235.9" width="6.9" height="6.9" rx="2.2"/>
<path d="M432.4 239.4 H441 M436.7 235.1 V243.7"/>
</g>
<path d="M476.4 233 H497.9 M487.15 222.3 V243.8" fill="none" stroke="#93c0ff" stroke-width="2.5" stroke-linecap="round"/>

<!-- gear -->
<g class="lic" stroke="#c9c9c9" stroke-width="2.4">
<path d="M485.84 425.80 L485.85 426.15 L485.87 426.51 L485.98 426.88 L486.40 427.32 L487.43 427.93 L488.38 428.63 L488.64 429.22 L488.58 429.72 L488.42 430.20 L488.22 430.66 L488.00 431.11 L487.76 431.55 L487.50 431.98 L487.22 432.39 L486.92 432.80 L486.59 433.17 L486.18 433.48 L485.54 433.54 L484.46 433.07 L483.42 432.49 L482.82 432.34 L482.45 432.43 L482.13 432.59 L481.82 432.77 L481.52 432.94 L481.22 433.14 L480.96 433.42 L480.79 434.01 L480.77 435.20 L480.63 436.38 L480.26 436.90 L479.79 437.10 L479.30 437.19 L478.80 437.25 L478.30 437.29 L477.80 437.30 L477.30 437.29 L476.80 437.25 L476.30 437.19 L475.81 437.10 L475.34 436.90 L474.97 436.38 L474.83 435.20 L474.81 434.01 L474.64 433.42 L474.38 433.14 L474.08 432.94 L473.78 432.77 L473.47 432.59 L473.15 432.43 L472.78 432.34 L472.18 432.49 L471.14 433.07 L470.06 433.54 L469.42 433.48 L469.01 433.17 L468.68 432.80 L468.38 432.39 L468.10 431.98 L467.84 431.55 L467.60 431.11 L467.38 430.66 L467.18 430.20 L467.02 429.72 L466.96 429.22 L467.22 428.63 L468.17 427.93 L469.20 427.32 L469.62 426.88 L469.73 426.51 L469.75 426.15 L469.76 425.80 L469.75 425.45 L469.73 425.09 L469.62 424.72 L469.20 424.28 L468.17 423.67 L467.22 422.97 L466.96 422.38 L467.02 421.88 L467.18 421.40 L467.38 420.94 L467.60 420.49 L467.84 420.05 L468.10 419.62 L468.38 419.21 L468.68 418.80 L469.01 418.43 L469.42 418.12 L470.06 418.06 L471.14 418.53 L472.18 419.11 L472.78 419.26 L473.15 419.17 L473.47 419.01 L473.78 418.83 L474.08 418.66 L474.38 418.46 L474.64 418.18 L474.81 417.59 L474.83 416.40 L474.97 415.22 L475.34 414.70 L475.81 414.50 L476.30 414.41 L476.80 414.35 L477.30 414.31 L477.80 414.30 L478.30 414.31 L478.80 414.35 L479.30 414.41 L479.79 414.50 L480.26 414.70 L480.63 415.22 L480.77 416.40 L480.79 417.59 L480.96 418.18 L481.22 418.46 L481.52 418.66 L481.82 418.83 L482.13 419.01 L482.45 419.17 L482.82 419.26 L483.42 419.11 L484.46 418.53 L485.54 418.06 L486.18 418.12 L486.59 418.43 L486.92 418.80 L487.22 419.21 L487.50 419.62 L487.76 420.05 L488.00 420.49 L488.22 420.94 L488.42 421.40 L488.58 421.88 L488.64 422.38 L488.38 422.97 L487.43 423.67 L486.40 424.28 L485.98 424.72 L485.87 425.09 L485.85 425.45Z"/>
<circle cx="477.8" cy="425.8" r="3.2"/>
</g>

<!-- camera app icons -->
<use href="#cam" x="131.7" y="400.2" width="50.4" height="50.6"/>
<use href="#cam" x="555" y="27" width="44.5" height="44.5"/>

<!-- mic off -->
<g fill="none" stroke="#fff" stroke-linecap="round" stroke-linejoin="round">
<rect x="942.7" y="715.5" width="9.1" height="16.4" rx="4.55" fill="#fff" stroke="none"/>
<path d="M939.2 726.5 a8 8 0 0 0 16 0" stroke-width="1.6"/>
<path d="M947.2 734.6 V739.4 M942.4 739.5 H951.6" stroke-width="1.6"/>
<path d="M936.6 714.8 L960 737.9" stroke="#1e1e1e" stroke-width="2"/>
<path d="M934.9 716.4 L958.3 739.4" stroke-width="1.9"/>
</g>
<!-- cam off -->
<g>
<rect x="1300.1" y="718.9" width="18.7" height="17" rx="3" fill="#fff"/>
<path d="M1319.6 725 L1324.4 720.9 C1325.1 720.3 1326 720.8 1326 721.7 V733.4 C1326 734.3 1325.1 734.8 1324.4 734.2 L1319.6 730.2Z" fill="#fff"/>
<path d="M1302.3 714.3 L1326.8 737.8" stroke="#1e1e1e" stroke-width="2" fill="none" stroke-linecap="round"/>
<path d="M1300.7 716 L1325.1 739.3" stroke="#fff" stroke-width="1.9" fill="none" stroke-linecap="round"/>
</g>
<!-- chevrons -->
<path d="M1207.4 724.6 L1216.8 734 L1226.2 724.6 M1573.2 724.6 L1583 734 L1592.8 724.6" fill="none" stroke="#8c8c8c" stroke-width="2.6" stroke-linecap="round" stroke-linejoin="round"/>

<!-- chat widget bubble -->
<path d="M1924 958.5 C1933.2 958.5 1940 964.7 1940 972.6 C1940 980.5 1933.2 986.8 1924 986.8 C1922.6 986.8 1921.2 986.6 1919.9 986.3 C1917.5 988.6 1914.5 990.2 1911.3 990.8 C1910.6 990.9 1910.2 990.1 1910.6 989.6 C1912.1 987.6 1912.9 985.4 1913 983.2 C1909.8 980.6 1907.8 976.8 1907.8 972.6 C1907.8 964.7 1914.8 958.5 1924 958.5Z" fill="#efefef"/>
</svg>
<!--ICONS_END-->

</div></div>
</body>
</html>
